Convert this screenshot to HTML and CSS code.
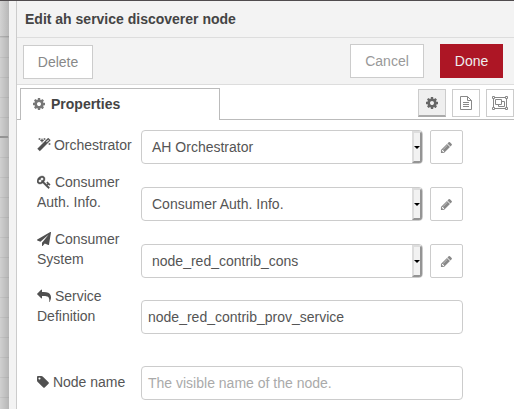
FILE: index.html
```html
<!DOCTYPE html>
<html lang="en">
<head>
<meta charset="utf-8">
<title>Edit node</title>
<link rel="stylesheet" href="styles.css">
</head>
<body>
<svg class="defs" width="0" height="0">
<symbol id="cog" viewBox="0 0 1792 1792"><path d="M1152 896q0-106-75-181t-181-75-181 75-75 181 75 181 181 75 181-75 75-181zm512-109v222q0 12-8 23t-20 13l-185 28q-19 54-39 91 35 50 107 138 10 12 10 25t-9 23q-27 37-99 108t-94 71q-12 0-26-9l-138-108q-44 23-91 38-16 136-29 186-7 28-36 28h-222q-14 0-24.500-8.500t-11.500-21.500l-28-184q-49-16-90-37l-141 107q-10 9-25 9-14 0-25-11-126-114-165-168-7-10-7-23 0-12 8-23 15-21 51-66.500t54-70.500q-27-50-41-99l-183-27q-13-2-21-12.500t-8-23.500v-222q0-12 8-23t19-13l186-28q14-46 39-92-40-57-107-138-10-12-10-24 0-10 9-23 26-36 98.500-107.500t94.500-71.500q13 0 26 10l138 107q44-23 91-38 16-136 29-186 7-28 36-28h222q14 0 24.500 8.500t11.500 21.500l28 184q49 16 90 37l142-107q9-9 24-9 13 0 25 10 129 119 165 170 7 8 7 22 0 12-8 23-15 21-51 66.500t-54 70.500q26 50 41 98l183 28q13 2 21 12.500t8 23.500z"/></symbol>
<symbol id="magic" viewBox="0 0 1792 1792"><path d="M1254 581l293-293-107-107-293 293zm447-293q0 27-18 45l-1286 1286q-18 18-45 18t-45-18l-198-198q-18-18-18-45t18-45l1286-1286q18-18 45-18t45 18l198 198q18 18 18 45zm-1351-190l98 30-98 30-30 98-30-98-98-30 98-30 30-98zm350 162l196 60-196 60-60 196-60-196-196-60 196-60 60-196zm930 478l98 30-98 30-30 98-30-98-98-30 98-30 30-98zm-640-640l98 30-98 30-30 98-30-98-98-30 98-30 30-98z"/></symbol>
<symbol id="key" viewBox="0 0 1792 1792"><path d="M832 512q0-80-56-136t-136-56-136 56-56 136q0 42 19 83-41-19-83-19-80 0-136 56t-56 136 56 136 136 56 136-56 56-136q0-42-19-83 41 19 83 19 80 0 136-56t56-136zm851 704q0 17-49 66t-66 49q-9 0-28.500-16t-36.500-33-38.500-40-24.500-26l-96 96 220 220q28 28 28 68 0 42-39 81t-81 39q-40 0-68-28l-671-671q-176 131-365 131-163 0-265.500-102.500t-102.500-265.500q0-160 95-313t248-248 313-95q163 0 265.500 102.500t102.500 265.500q0 189-131 365l355 355 96-96q-3-3-26-24.500t-40-38.500-33-36.500-16-28.500q0-17 49-66t66-49q13 0 23 10 6 6 46 44.500t82 79.500 86.500 86 73 78 28.500 41z"/></symbol>
<symbol id="plane" viewBox="0 0 1792 1792"><path d="M1764 11q33 24 27 64l-256 1536q-5 29-32 45-14 8-31 8-11 0-24-5l-453-185-242 295q-18 23-49 23-13 0-22-4-19-7-30.500-23.500t-11.500-36.500v-349l864-1059-1069 925-395-162q-37-14-40-55-2-40 32-59l1664-960q15-9 32-9 20 0 36 11z"/></symbol>
<symbol id="reply" viewBox="0 0 1792 1792"><path d="M1792 1120q0 166-127 451-3 7-10.500 24t-13.500 30-13 22q-12 17-28 17-15 0-23.500-10t-8.500-25q0-9 2.500-26.500t2.500-23.500q5-68 5-123 0-101-17.500-181t-48.500-138.500-80-101-105.500-69.500-133-42.500-154-21.500-175.500-6h-224v256q0 26-19 45t-45 19-45-19l-512-512q-19-19-19-45t19-45l512-512q19-19 45-19t45 19 19 45v256h224q713 0 875 403 53 134 53 333z"/></symbol>
<symbol id="tag" viewBox="0 0 1792 1792"><path d="M448 448q0-53-37.500-90.500t-90.500-37.500-90.500 37.500-37.500 90.500 37.500 90.500 90.500 37.500 90.500-37.500 37.500-90.500zm1067 576q0 53-37 90l-491 492q-39 37-91 37-53 0-90-37l-715-716q-38-37-64.500-101t-26.500-117v-416q0-52 38-90t90-38h416q53 0 117 26.500t102 64.500l715 714q37 39 37 91z"/></symbol>
<symbol id="pencil" viewBox="0 0 1792 1792"><path d="M491 1536l91-91-235-235-91 91v107h128v128h107zm523-928q0-22-22-22-10 0-17 7l-542 542q-7 7-7 17 0 22 22 22 10 0 17-7l542-542q7-7 7-17zm-54-192l416 416-832 832h-416v-416zm683 96q0 53-37 90l-166 166-416-416 166-165q36-38 90-38 53 0 91 38l235 234q37 39 37 91z"/></symbol>
</svg>
<div class="app">
  <div class="canvas"><div class="wire"></div></div>
  <div class="separator"></div>
  <div class="panel">
    <div class="title">Edit ah service discoverer node</div>
    <div class="toolbar">
      <div class="button delete">Delete</div>
      <div class="button cancel">Cancel</div>
      <div class="button done">Done</div>
    </div>
    <div class="tabs">
      <div class="tab"><svg class="icon"><use href="#cog"/></svg><span>Properties</span></div>
      <div class="tools">
        <div class="tool active"><svg class="icon"><use href="#cog"/></svg></div>
        <div class="tool"><svg class="line" width="12" height="14" viewBox="0 0 12 14"><path d="M.5.5h7l4 4v9H.5zM7.500.5v4h4M3 6.500h6M3 8.500h6M3 10.500h6"/></svg></div>
        <div class="tool"><svg class="line" width="16" height="14" viewBox="0 0 16 14"><path d="M2.500 1.500h11M2.500 12.500h11M1.500 2.500v9M14.500 2.500v9M.5.500h2v2h-2zM13.500.500h2v2h-2zM.5 11.500h2v2h-2zM13.500 11.500h2v2h-2zM3.500 3.500h6v5h-6zM9.500 5.500h3v5h-6v-2"/></svg></div>
      </div>
    </div>
    <div class="form">
      <div class="row">
        <div class="label single"><svg class="icon narrow bold"><use href="#magic"/></svg> Orchestrator</div>
        <div class="select"><span>AH Orchestrator</span><i class="arrow"></i></div>
        <div class="edit"><svg class="icon"><use href="#pencil"/></svg></div>
      </div>
      <div class="row">
        <div class="label"><svg class="icon bold"><use href="#key"/></svg> Consumer<br>Auth. Info.</div>
        <div class="select"><span>Consumer Auth. Info.</span><i class="arrow"></i></div>
        <div class="edit"><svg class="icon"><use href="#pencil"/></svg></div>
      </div>
      <div class="row">
        <div class="label"><svg class="icon"><use href="#plane"/></svg> Consumer<br>System</div>
        <div class="select"><span>node_red_contrib_cons</span><i class="arrow"></i></div>
        <div class="edit"><svg class="icon"><use href="#pencil"/></svg></div>
      </div>
      <div class="row service">
        <div class="label"><svg class="icon"><use href="#reply"/></svg> Service<br>Definition</div>
        <div class="input">node_red_contrib_prov_service</div>
      </div>
      <div class="row">
        <div class="label single name"><svg class="icon tagicon"><use href="#tag"/></svg> Node name</div>
        <div class="input placeholder">The visible name of the node.</div>
      </div>
    </div>
  </div>
</div>
</body>
</html>
```
FILE: styles.css
```css
* { box-sizing: border-box; }
body { margin: 0; overflow: hidden; background: #fff; color: #555; font: 14px/20px "Liberation Sans", Arial, sans-serif; }
.defs { display: block; }
.app { display: flex; height: 409px; border-top: 1px solid #504c4e; }
.canvas {
  width: 9px; flex: none; padding-top: 135px;
  background:
    linear-gradient(90deg, transparent 0, rgba(0,0,0,.13) 100%),
    linear-gradient(#b4b4b4, #b4b4b4) 0 35px / 9px 1px no-repeat,
    linear-gradient(#d3d3d3, #d3d3d3) 0 0 / 9px 35px no-repeat,
    repeating-linear-gradient(#d0d0d0 0 16px, #c5c5c5 16px 17px, #d0d0d0 17px 20px);
}
.wire { height: 2px; width: 8px; background: #949494; }
.separator { width: 8px; flex: none; background: #f3f3f3; border-right: 1px solid #ccc; }
.panel { width: 497px; flex: none; }
.title { height: 37px; padding: 8px; background: #f3f3f3; border-bottom: 1px solid #ddd; color: #444; font-weight: bold; }
.toolbar { display: flex; height: 47px; padding: 6px 11px 0 6px; background: #f3f3f3; border-bottom: 1px solid #ddd; }
.button { height: 34px; border: 1px solid #ccc; background: #fff; color: #888; line-height: 32px; text-align: center; }
.delete { width: 70px; margin: 1px auto 0 0; }
.cancel { width: 74px; margin-right: 16px; color: #999; }
.done { width: 63px; border-color: #ad1625; background: #ad1625; color: #eee; }
.tabs { display: flex; height: 35px; padding: 3px 0 0 3px; background: linear-gradient(#bbb, #bbb) 0 100% / 100% 1px no-repeat; }
.tab { display: flex; align-items: center; width: 200px; height: 32px; padding: 0 0 2px 11px; border: 1px solid #bbb; border-bottom: 0; background: #fff; color: #444; font-weight: bold; }
.tab .icon { margin-right: 5px; fill: #777; }
.tools { display: flex; gap: 6px; margin: 1px 0 0 198px; }
.tool { display: flex; align-items: center; justify-content: center; width: 28px; height: 28px; border: 1px solid #ccc; flex: none; }
.active { background: #efefef; border-bottom: 2px solid #aaa; }
.active .icon { fill: #666; }
.line { fill: none; stroke: #888; stroke-width: 1; }
.icon { width: 14px; height: 14px; fill: #505050; vertical-align: -2px; }
.bold { stroke: #505050; stroke-width: 50; }
.narrow { width: 14px; margin-right: -1px; }
.tagicon { margin-right: -2px; }
.form { padding: 10px 0 0 20px; }
.row { display: flex; height: 34px; margin-bottom: 23px; }
.row.service { margin-top: -1px; margin-bottom: 32px; }
.label { width: 104px; margin-top: -15px; white-space: nowrap; }
.service .label { margin-top: -14px; }
.label.single { margin-top: 5px; }
.label.name { margin-top: 6px; }
.select, .input, .edit { border: 1px solid #ccc; border-radius: 4px; background: #fff; height: 34px; }
.select { display: flex; justify-content: space-between; width: 282px; padding-left: 10px; line-height: 32px; overflow: hidden; }
.arrow { display: flex; align-items: center; justify-content: center; width: 10px; background: #f2f2f2; border: 2px solid; border-color: #ddd #949494 #949494 #ddd; }
.arrow::before { content: ""; flex: none; border: 3px solid transparent; border-top-color: #000; border-bottom: 0; }
.edit { display: flex; align-items: center; justify-content: center; width: 33px; margin-left: 7px; border-radius: 2px; }
.edit .icon { width: 13px; height: 13px; margin-right: 1px; fill: #888; }
.input { width: 322px; padding-left: 6px; line-height: 32px; }
.placeholder { color: #aaa; }
```
